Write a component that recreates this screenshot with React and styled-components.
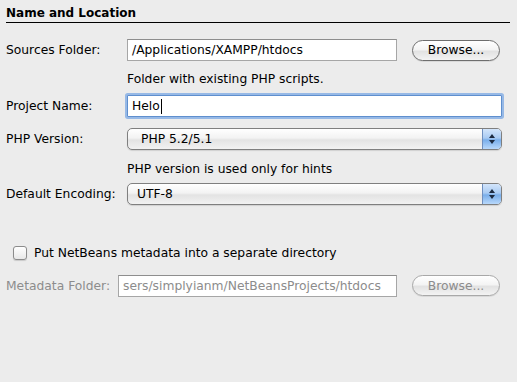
import React from 'react';
import styled, { createGlobalStyle } from 'styled-components';

const GlobalStyle = createGlobalStyle`
    html, body {
        margin: 0;
        padding: 0;
        background: #ececec;
    }
    body {
        font-family: "DejaVu Sans", "Liberation Sans", sans-serif;
        font-size: 12.3px;
        color: #000;
    }
`;

const Panel = styled.div`
    width: 517px;
    height: 382px;
    box-sizing: border-box;
    padding: 5px 6px 0 6px;
    background: #ececec;
`;

const SectionTitle = styled.div`
    font-weight: bold;
    font-size: 12px;
    line-height: 16px;
    padding-bottom: 1px;
    border-bottom: 1px solid #000;
    margin-right: 1px;
`;

const Row = styled.div`
    display: flex;
    align-items: center;
    height: ${p => p.h || 22}px;
    margin-top: ${p => p.top || 0}px;
`;

const Label = styled.span`
    width: ${p => p.w || 121}px;
    flex: none;
    color: ${p => (p.disabled ? '#8c8c8c' : '#000')};
    white-space: nowrap;
`;

const TextField = styled.div`
    box-sizing: border-box;
    width: ${p => p.w}px;
    height: 22px;
    background: #fff;
    border: 1px solid ${p => (p.focused ? '#5f8fce' : '#a6a6a6')};
    border-top-color: ${p => (p.focused ? '#5f8fce' : '#8e8e8e')};
    box-shadow: ${p => (p.focused ? '0 0 0 2px #97b9e6' : 'none')};
    padding: 0 4px;
    display: flex;
    align-items: center;
    color: ${p => (p.disabled ? '#8c8c8c' : '#000')};
    overflow: hidden;
    white-space: nowrap;
    border-radius: ${p => (p.focused ? '1px' : '0')};
`;

const Caret = styled.span`
    display: inline-block;
    width: 1px;
    height: 15px;
    background: #000;
    margin-left: 1px;
`;

const Button = styled.div`
    box-sizing: border-box;
    width: 88px;
    height: 21px;
    margin-left: ${p => p.gap || 15}px;
    border: 1px solid ${p => (p.disabled ? '#a8a8a8' : '#6e6e6e')};
    border-radius: 11px;
    background: linear-gradient(#ffffff 0%, #f4f4f4 45%, #e2e2e2 55%, #f3f3f3 100%);
    display: flex;
    align-items: center;
    justify-content: center;
    color: ${p => (p.disabled ? '#8c8c8c' : '#000')};
    box-shadow: 0 1px 0 rgba(0, 0, 0, 0.08);
`;

const Select = styled.div`
    box-sizing: border-box;
    width: 375px;
    height: 22px;
    border: 1px solid #7f7f7f;
    border-radius: 5px;
    background: linear-gradient(#ffffff 0%, #f3f3f3 45%, #e3e3e3 55%, #f2f2f2 100%);
    display: flex;
    align-items: center;
    overflow: hidden;
    box-shadow: 0 1px 1px rgba(0, 0, 0, 0.12);
`;

const SelectValue = styled.span`
    flex: 1;
    padding-left: ${p => p.pad || 13}px;
`;

const Stepper = styled.div`
    width: 18px;
    height: 100%;
    border-left: 1px solid #6f8fbf;
    background: linear-gradient(#d3e5fb 0%, #a9cbf3 45%, #79aeea 55%, #b8d8fb 100%);
    display: flex;
    align-items: center;
    justify-content: center;
`;

const Hint = styled.div`
    padding-left: 121px;
    margin-top: ${p => p.top || 0}px;
    line-height: 16px;
`;

const CheckRow = styled.label`
    display: flex;
    align-items: center;
    margin-top: ${p => p.top || 0}px;
    padding-left: 7px;
    height: 16px;
`;

const CheckBox = styled.span`
    box-sizing: border-box;
    width: 14px;
    height: 14px;
    border: 1px solid #8c8c8c;
    border-radius: 3px;
    background: linear-gradient(#ffffff, #e8e8e8);
    box-shadow: 0 1px 1px rgba(0, 0, 0, 0.15);
    margin-right: 7px;
`;

function Arrows() {
    return (
        <svg width="8" height="12" viewBox="0 0 8 12">
            <path d="M4 1 L7 5 L1 5 Z" fill="#1c2a40" />
            <path d="M4 11 L7 7 L1 7 Z" fill="#1c2a40" />
        </svg>
    );
}

function App() {
    return (
        <Panel>
            <GlobalStyle />
            <SectionTitle>Name and Location</SectionTitle>

            <Row top={16}>
                <Label>Sources Folder:</Label>
                <TextField w={270}>/Applications/XAMPP/htdocs</TextField>
                <Button>Browse...</Button>
            </Row>
            <Hint top={10}>Folder with existing PHP scripts.</Hint>

            <Row top={8} h={22}>
                <Label>Project Name:</Label>
                <TextField w={375} focused>Helo<Caret /></TextField>
            </Row>

            <Row top={11}>
                <Label>PHP Version:</Label>
                <Select>
                    <SelectValue>PHP 5.2/5.1</SelectValue>
                    <Stepper><Arrows /></Stepper>
                </Select>
            </Row>
            <Hint top={11}>PHP version is used only for hints</Hint>

            <Row top={6}>
                <Label>Default Encoding:</Label>
                <Select>
                    <SelectValue pad={9}>UTF-8</SelectValue>
                    <Stepper><Arrows /></Stepper>
                </Select>
            </Row>

            <CheckRow top={40}>
                <CheckBox />
                Put NetBeans metadata into a separate directory
            </CheckRow>

            <Row top={13} h={23}>
                <Label w={112} disabled>Metadata Folder:</Label>
                <TextField w={279} disabled>sers/simplyianm/NetBeansProjects/htdocs</TextField>
                <Button disabled>Browse...</Button>
            </Row>
        </Panel>
    );
}

export default App;
